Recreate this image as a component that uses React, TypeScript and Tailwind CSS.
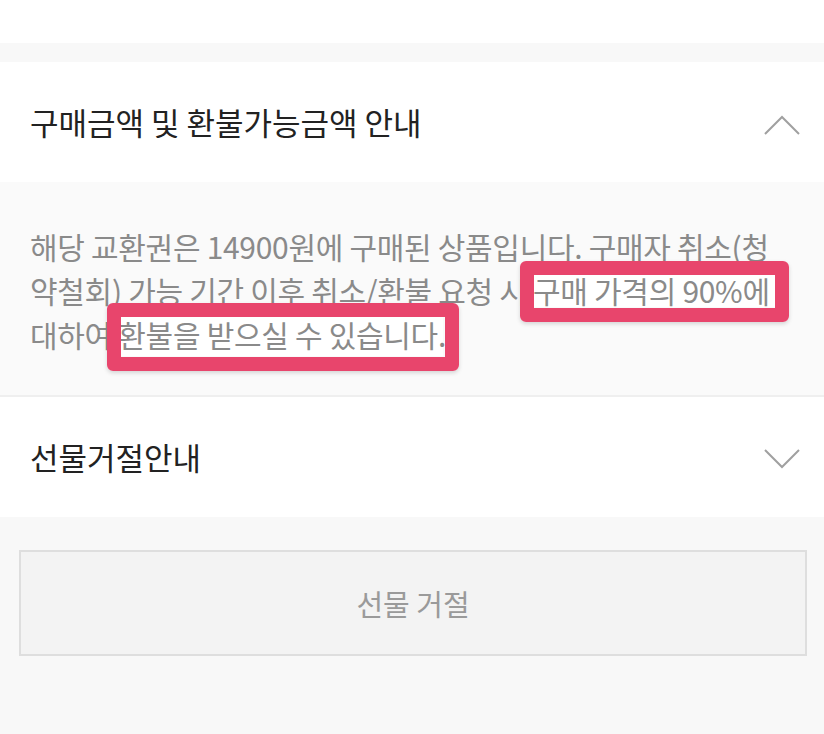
import React from "react";

const font = { fontFamily: '"Noto Sans CJK KR", "Noto Sans", sans-serif' };

function Chevron({ up }: { up?: boolean }) {
  return (
    <svg width="36" height="20" viewBox="0 0 36 20" fill="none">
      {up ? (
        <path d="M1 19 L18 2 L35 19" stroke="#a0a0a0" strokeWidth="2" />
      ) : (
        <path d="M1 1 L18 18 L35 1" stroke="#a0a0a0" strokeWidth="2" />
      )}
    </svg>
  );
}

export default function App() {
  return (
    <div className="w-[824px] h-[734px] bg-[#f8f8f8] flex flex-col overflow-hidden" style={font}>
      <div className="h-[43px] bg-white shrink-0" />
      <div className="h-[19px] bg-[#f8f8f8] shrink-0" />
      <div className="h-[120px] bg-white flex items-center justify-between pl-[30px] pr-[24px] shrink-0">
        <span className="text-[31px] text-[#222]">구매금액 및 환불가능금액 안내</span>
        <div className="mt-[6px]"><Chevron up /></div>
      </div>
      <div className="relative h-[213px] bg-[#fafafa] pl-[30px] pt-[42px] shrink-0">
        <div className="absolute left-[121px] top-[135px] w-[322px] h-[39px] bg-white" />
        <div className="absolute left-[533px] top-[93px] w-[242px] h-[32px] bg-white" />
        <p className="relative text-[30px] leading-[44px] tracking-[-0.3px] text-[#8a8a8a] whitespace-nowrap">
          해당 교환권은 14900원에 구매된 상품입니다. 구매자 취소(청
          <br />
          약철회) 가능 기간 이후 취소/환불 요청 시 구매 가격의 90%에
          <br />
          대하여 환불을 받으실 수 있습니다.
        </p>
        <div className="absolute left-[520px] top-[79px] w-[269px] h-[61px] border-[14px] border-[#e8456c] rounded-[6px] shadow-[0_2px_4px_rgba(0,0,0,0.15)]" />
        <div className="absolute left-[107px] top-[121px] w-[352px] h-[68px] border-[14px] border-[#e8456c] rounded-[6px] shadow-[0_2px_4px_rgba(0,0,0,0.15)]" />
      </div>
      <div className="h-[2px] bg-[#efefef] shrink-0" />
      <div className="h-[120px] bg-white flex items-center justify-between pl-[30px] pr-[24px] shrink-0">
        <span className="text-[31px] text-[#222]">선물거절안내</span>
        <div className="mt-[4px]"><Chevron /></div>
      </div>
      <div className="pl-[19px] pr-[17px] pt-[33px]">
        <div className="h-[106px] bg-[#f3f3f3] border-2 border-[#dedede] flex items-center justify-center">
          <span className="text-[29px] text-[#9a9a9a] mt-[2px]">선물 거절</span>
        </div>
      </div>
    </div>
  );
}
